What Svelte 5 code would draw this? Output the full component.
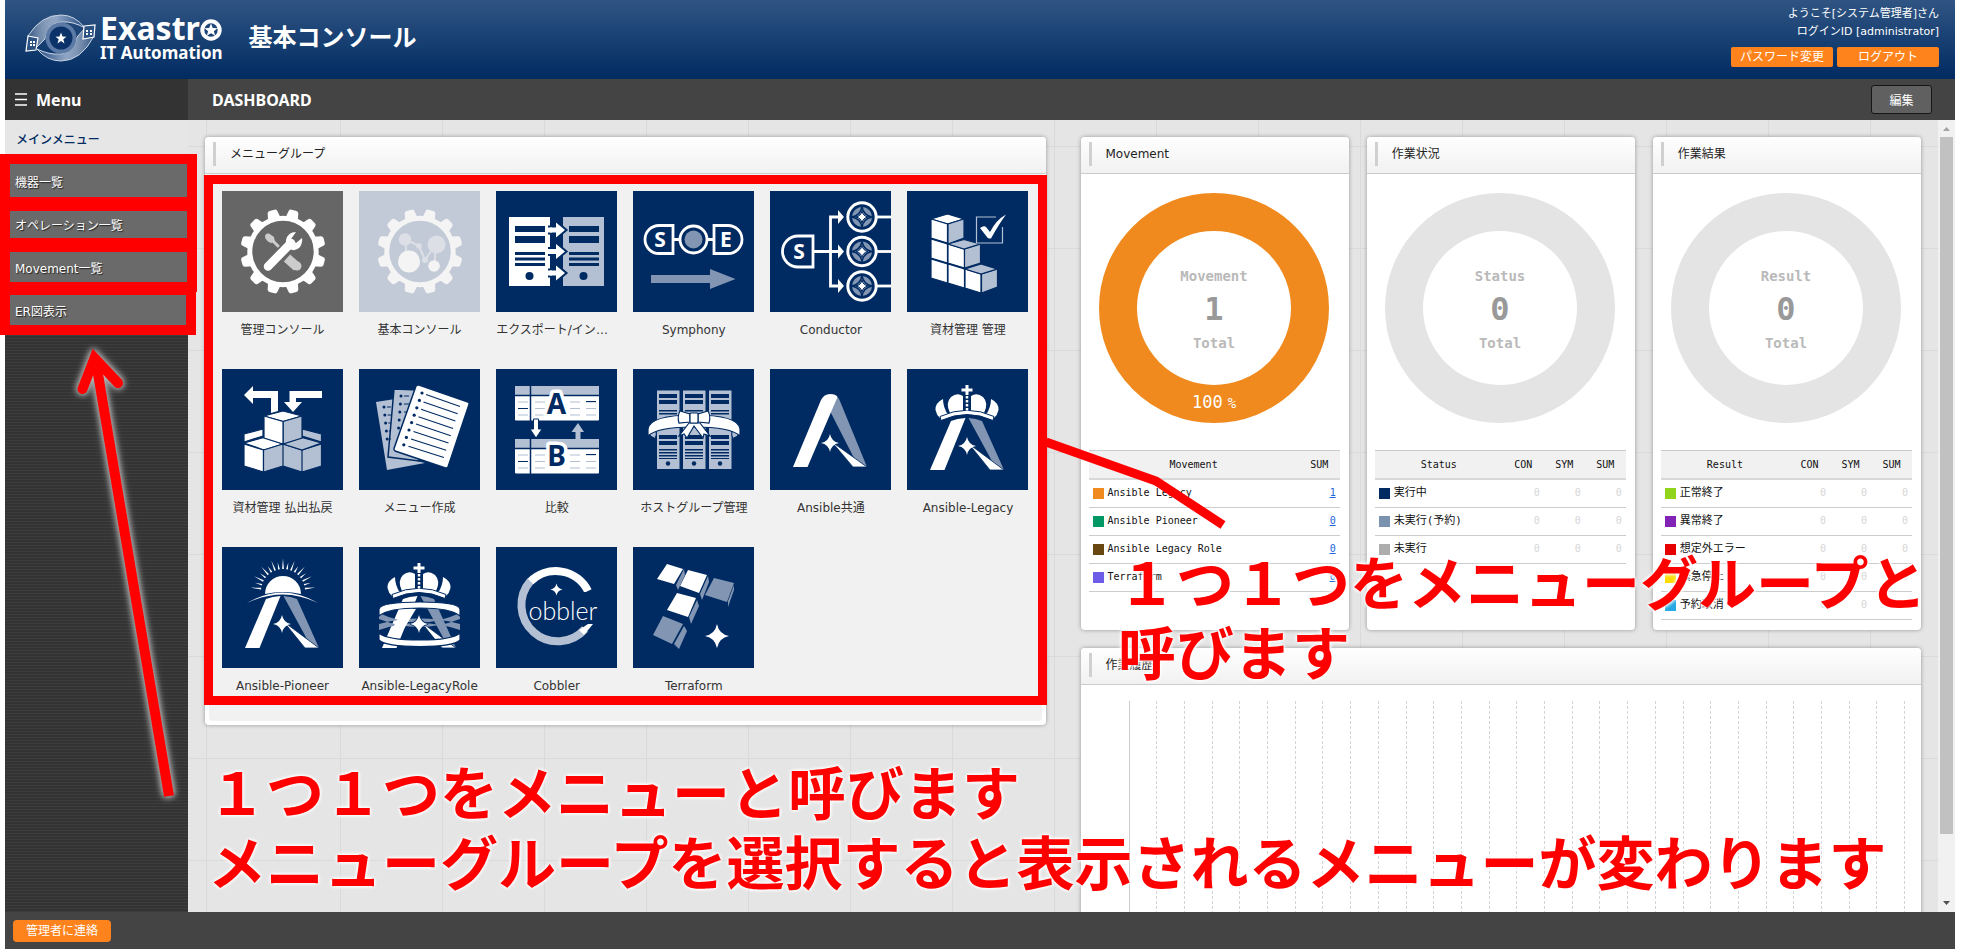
<script>
  const sideItems = ['機器一覧', 'オペレーション一覧', 'Movement一覧', 'ER図表示'];

  const groups = [
    { icon: 'tools', label: '管理コンソール', tone: 'gray' },
    { icon: 'nodes', label: '基本コンソール', tone: 'pale' },
    { icon: 'export', label: 'エクスポート/インポート' },
    { icon: 'symphony', label: 'Symphony' },
    { icon: 'conductor', label: 'Conductor' },
    { icon: 'stock', label: '資材管理 管理' },
    { icon: 'carry', label: '資材管理 払出払戻' },
    { icon: 'sheets', label: 'メニュー作成' },
    { icon: 'compare', label: '比較' },
    { icon: 'hosts', label: 'ホストグループ管理' },
    { icon: 'ansible', label: 'Ansible共通' },
    { icon: 'legacy', label: 'Ansible-Legacy' },
    { icon: 'pioneer', label: 'Ansible-Pioneer' },
    { icon: 'role', label: 'Ansible-LegacyRole' },
    { icon: 'cobbler', label: 'Cobbler' },
    { icon: 'terraform', label: 'Terraform' }
  ];

  const cards = [
    {
      title: 'Movement', name: 'Movement', total: 1, ring: '#f08a1e', percent: '100', cols: ['SUM'],
      rows: [
        { color: '#f08a1e', text: 'Ansible Legacy', values: [1] },
        { color: '#009966', text: 'Ansible Pioneer', values: [0] },
        { color: '#684711', text: 'Ansible Legacy Role', values: [0] },
        { color: '#6c5ce7', text: 'Terraform', values: [0] }
      ]
    },
    {
      title: '作業状況', name: 'Status', total: 0, ring: '#e4e4e4', cols: ['CON', 'SYM', 'SUM'],
      rows: [
        { color: '#002b62', text: '実行中', values: [0, 0, 0] },
        { color: '#7b91b0', text: '未実行(予約)', values: [0, 0, 0] },
        { color: '#adadad', text: '未実行', values: [0, 0, 0] }
      ]
    },
    {
      title: '作業結果', name: 'Result', total: 0, ring: '#e4e4e4', cols: ['CON', 'SYM', 'SUM'],
      rows: [
        { color: '#91d41c', text: '正常終了', values: [0, 0, 0] },
        { color: '#8123b4', text: '異常終了', values: [0, 0, 0] },
        { color: '#e60000', text: '想定外エラー', values: [0, 0, 0] },
        { color: '#ffdc00', text: '緊急停止', values: [0, 0, 0] },
        { color: '#27a9e3', text: '予約取消', values: [0, 0, 0] }
      ]
    }
  ];

  const N = '#002b62';
  const L = '#b3bfd2';
  const M = '#8296b4';
  const range = (n) => Array.from({ length: n }, (_, i) => i);

  const starPath = (x, y, r) => {
    const c = r * 0.16;
    return `M${x} ${y - r}Q${x + c} ${y - c} ${x + r} ${y}Q${x + c} ${y + c} ${x} ${y + r}Q${x - c} ${y + c} ${x - r} ${y}Q${x - c} ${y - c} ${x} ${y - r}z`;
  };
</script>

{#snippet gear(fill)}
  <g transform="translate(61 60.5)" {fill}>
    {#each range(12) as i}
      <path d="M-6.5 -33L-5 -40.5Q-4.6 -42.5 -2.6 -42.6H2.6Q4.6 -42.5 5 -40.5L6.5 -33z" transform="rotate({15 + i * 30})" />
    {/each}
    <circle r="33.2" fill="none" stroke={fill} stroke-width="5" />
  </g>
{/snippet}

{#snippet server(x, y, w, h, fill)}
  <rect {x} {y} width={w} height={h} {fill} />
{/snippet}

{#snippet crown()}
  <g fill="#fff">
    <path d="M58.5 16h3v3.5h4v3h-4v3.500h-3v-3.500h-4v-3h4z" />
    <path d="M36 30Q28 34 28.500 41Q29.500 46 33 49L41 46Q36 38 36 30z" />
    <path d="M84 30Q92 34 91.500 41Q90.500 46 87 49L79 46Q84 38 84 30z" />
    <path d="M43 44Q38 34 44 28Q50 23 56 27V42Q49 42 43 44z" />
    <path d="M77 44Q82 34 76 28Q70 23 64 27V42Q71 42 77 44z" />
    <path d="M33 47.500Q60 35 87 47.500L86 51.500Q60 39.500 34 51.500z" stroke="#002b62" stroke-width="1" />
  </g>
  <path d="M60 27V43" stroke="#fff" stroke-width="2.500" stroke-dasharray="2.500 1.500" />
{/snippet}

{#snippet legs()}
  <path d="M23 101L44 52Q50 49.500 58.500 49L37.500 101z" fill="#fff" />
  <path d="M61.500 49Q69 49.500 75 52L97 101L86 94z" fill={M} />
  <path d="M62 75L97 101H83z" fill="#fff" stroke={N} stroke-width="0.800" />
  <path d={starPath(60, 77, 9)} fill="#fff" />
{/snippet}

{#snippet glyph(name)}
  <svg viewBox="0 0 121 121" aria-hidden="true">
    {#if name === 'tools'}
      {@render gear('#fff')}
      <path d="M49 48L58 57" stroke="#ccc" stroke-width="3" />
      <path d="M43 46Q43 42 47 42.500L52 46L53 51L49 52Q44 50 43 46z" fill="#ccc" />
      <path d="M65 67L75 76" stroke="#ccc" stroke-width="9.500" />
      <circle cx="75" cy="75" r="4.500" fill="#ccc" />
      <path d="M46 75.500L69 52" stroke="#666" stroke-width="12" />
      <path d="M46 75.500L69 52" stroke="#fff" stroke-width="8.500" stroke-linecap="round" />
      <path d="M74 41Q66 41 64 49Q63 55 67 58Q74 61 78 56Q81 51 80 47L74 52L69 48z" fill="#fff" />
    {:else if name === 'nodes'}
      {@render gear('#f4f4f4')}
      <path d="M46 48L60 55L66 69L77 53M47 48V68M76 54V75" fill="none" stroke="#dce0e6" stroke-width="2" />
      <g fill="#dce0e6">
        <circle cx="46" cy="48.500" r="6.200" />
        <circle cx="77.500" cy="53.500" r="9" />
        <circle cx="60" cy="55" r="2.800" />
        <circle cx="66" cy="69" r="3" />
      </g>
      <circle cx="50" cy="70.500" r="11" fill="#f4f4f4" />
      <circle cx="75" cy="75" r="5.800" fill="#f4f4f4" />
    {:else if name === 'export'}
      {#each [[13, '#fff'], [67, L]] as [x, fill]}
        {@render server(x, 26, 41, 69, fill)}
        <g fill={N}>
          <rect x={x + 6} y="35" width="30" height="6" />
          <rect x={x + 6} y="45" width="30" height="7" />
          <rect x={x + 6} y="61" width="30" height="3" />
          <rect x={x + 6} y="66.500" width="30" height="3" />
          <rect x={x + 6} y="72" width="30" height="3" />
          <circle cx={x + 20.5} cy="85" r="4" />
        </g>
      {/each}
      {#each [39, 60.5, 82] as y}
        <path d="M54 {y - 2.500}H60V{y - 7.500}L69 {y}L60 {y + 7.500}V{y + 2.500}H54z" fill="#fff" stroke={N} stroke-width="4" paint-order="stroke" />
        <rect x="50" y={y - 2.500} width="6" height="5" fill="#fff" />
      {/each}
    {:else if name === 'symphony'}
      <g fill="none" stroke="#fff" stroke-width="2.800">
        <path d="M40 34.500H26A14 14 0 0 0 26 62.500H40z" />
        <path d="M81 34.500H95A14 14 0 0 1 95 62.500H81z" />
        <circle cx="60.500" cy="48.500" r="13.500" />
        <path d="M40 48.500H47M74 48.500H81" />
      </g>
      <circle cx="60.500" cy="48.500" r="9" fill={M} />
      <g class="mark" fill="#fff" font-size="21">
        <text x="27" y="56">S</text>
        <text x="93" y="56">E</text>
      </g>
      <path d="M18 84H77V78L102.500 88L77 98V92H18z" fill={M} />
    {:else if name === 'conductor'}
      <g fill="none" stroke="#fff" stroke-width="2.800">
        <path d="M43 45H28A15.500 15.500 0 0 0 28 76H43z" />
        <path d="M43 60.500H70M70 26H60.500V95H70" />
      </g>
      <g class="mark" fill="#fff" font-size="21"><text x="29" y="68">S</text></g>
      {#each [26, 60.5, 95] as y}
        <path d="M68 {y - 7}L74 {y}L68 {y + 7}z" fill="#fff" />
        <path d="M106 {y}H121" stroke="#fff" stroke-width="2.800" />
        <circle cx="92" cy={y} r="14.200" fill={N} stroke="#fff" stroke-width="3" />
        <circle cx="92" cy={y} r="10" fill={M} />
        <path d={starPath(92, y, 10)} fill={M} stroke={N} stroke-width="1.500" />
        <path d={starPath(92, y, 6)} fill="#fff" stroke={N} stroke-width="1" />
      {/each}
    {:else if name === 'stock'}
      <g stroke={N} stroke-width="1.200">
        <g fill="#fff">
          <path d="M24 28L40.500 23L57 28L40.500 33z" />
          <path d="M24 28L40.500 33V52L24 47zM24 48L40.500 53V72L24 67zM24 68L40.500 73V92L24 87z" />
          <path d="M41 53L57.500 58V77L41 72zM41 73L57.500 78V97L41 92zM58 78L74 83V102L58 97z" />
        </g>
        <g fill={L}>
          <path d="M41 33L57 28V47L41 53zM57.500 58L73.500 53V72L57.500 77zM74.500 83L90.500 78V96L74.500 102z" />
          <path d="M41 53L57 48.500L73 53L57 58zM58 78L74 73L90 78L74 83z" />
        </g>
      </g>
      <path d="M89 26H69.500V52H95.500V36" fill="none" stroke={L} stroke-width="1.200" />
      <path d="M73 37Q77 34 79 36L83 41Q89 29 99 23.500Q92 33 84 47.500Q81 48 80 46z" fill="#fff" stroke={N} stroke-width="3" paint-order="stroke" />
    {:else if name === 'carry'}
      <g stroke={N} stroke-width="1.200">
        <g fill="#fff">
          <path d="M22 65L41 60V67L22 73z" />
          <path d="M22 74L42 68.500L61 75L42 81zM22 75L41.500 81V103L22 97z" />
          <path d="M42 47L61 42L80 47L61 52.500z" />
        </g>
        <g fill={L}>
          <path d="M41.500 81L61 75V97L41.500 103zM61 75L80 81V103L61 97zM80 81L99.500 75V97L80 103z" />
          <path d="M61 75L80 68.500L99.500 74L80 81z" />
          <path d="M80 60L99.500 65V73L80 67z" />
          <path d="M61 52.500L80 47V69L61 75z" />
        </g>
        <path d="M42 47L61 52.500V75L42 69z" fill="#fff" />
      </g>
      <path d="M22 26L31 17V22H56V42L49 44V29H31V35z" fill="#fff" />
      <path d="M100 22V29H74V33H80L71 43L62 33H67.500V22z" fill="#fff" />
    {:else if name === 'sheets'}
      <path d="M17 33L36 30L42 88L66 94L28 101z" fill={L} />
      <path d="M35 20L60 21V92L29 88z" fill={L} stroke={N} stroke-width="1.500" />
      {#each range(5) as i}
        <circle cx={25 + i * 0.8} cy={38 + i * 8} r="1.500" fill={N} />
        <path d="M{28 + i * 0.600} {38 + i * 8}H32" stroke={N} />
        <circle cx={42 - i * 0.600} cy={27 + i * 8} r="1.500" fill={N} />
        <path d="M45 {27 + i * 8}H50" stroke={N} />
      {/each}
      <path d="M60 16L109 33Q110.500 34 110 35.500L89 98Q88 99.500 86.500 99L36 82Q34.500 81 35 79.500L57 17Q58 15.500 60 16z" fill="#fff" stroke={N} stroke-width="1.500" />
      {#each range(8) as i}
        <circle cx={63 - i * 2.6} cy={24 + i * 7.4} r="1.600" fill={N} />
        <path d="M{67 - i * 2.500} {25.500 + i * 7.400}L{101 - i * 2.300} {37.500 + i * 7.300}" stroke={N} stroke-width="1.100" />
      {/each}
    {:else if name === 'compare'}
      {#each [17, 70] as y}
        <rect x="19" {y} width="84" height="34.500" rx="1" fill="#fff" />
        <rect x="19" {y} width="84" height="9" fill={L} />
        <path d="M19 {y + 9.500}H103M34.500 {y}V{y + 35}" stroke={N} stroke-width="1.500" />
        {#each [16, 22.5, 29] as dy}
          <path d="M22 {y + dy}H32M39 {y + dy}H49M74 {y + dy}H84M90 {y + dy}H100" stroke={L} stroke-width="1.200" />
        {/each}
        <path d="M22 {y + 22.500}H32M90 {y + 15.500}H100" stroke={N} stroke-width="1.200" />
      {/each}
      <path d="M37.500 50H42.500V60H46L40 69L34 60H37.500z" fill="#fff" stroke={N} stroke-width="1" />
      <path d="M79.500 70V63H75.500L82 54L88 63H84.500V70z" fill={L} />
      <g class="mark" fill={N} stroke="#fff" stroke-width="7" stroke-linejoin="round" paint-order="stroke" font-size="28">
        <text x="60.500" y="45">A</text>
        <text x="60.500" y="97">B</text>
      </g>
    {:else if name === 'hosts'}
      {#each [24, 50, 76] as x}
        {@render server(x, 21.5, 22.5, 78.5, L)}
        <g fill={N}>
          <rect x={x + 2} y="25" width="18" height="4" />
          <rect x={x + 2} y="31" width="18" height="4" />
          <path d="M{x + 2} 41h18v1.500h-18zM{x + 2} 44h18v1.500h-18z" />
          <rect x={x + 2} y="66" width="18" height="4" />
          <rect x={x + 2} y="72" width="18" height="4" />
          <path d="M{x + 2} 80h18v1.500h-18zM{x + 2} 83h18v1.500h-18zM{x + 2} 86h18v1.500h-18zM{x + 2} 89h18v1h-18z" />
          <circle cx={x + 11} cy="94.500" r="2.200" />
        </g>
      {/each}
      <path d="M16 58Q13 66 22 69.500Q24 66 23 62zM106 58Q109 66 100 69.500Q98 66 99 62z" fill={L} stroke={N} />
      <path d="M15 60Q17 46 61 46Q105 46 107 60V67Q98 58 61 58Q24 58 15 67z" fill="#fff" stroke={N} stroke-width="1.200" />
      <g fill="#fff" stroke={N} stroke-width="1.200">
        <path d="M56 54L46 67L51 65L54 69L61 57L70 69L71 65L77 67L67 54z" />
        <path d="M57 45L47 42Q44 47 46 54L57 53zM65 45L75 42Q78 47 76 54L65 53z" />
        <rect x="57" y="44" width="8" height="10" rx="1" />
      </g>
    {:else if name === 'ansible'}
      <path d="M60 27Q67 25 69.500 31L97 98L85 91L60 42z" fill={M} />
      <path d="M23 98L51 31Q54 25 60 25Q66 25 67.500 28L37.500 98z" fill="#fff" />
      <path d="M62 73L97 98H83z" fill="#fff" stroke={N} stroke-width="0.800" />
      <path d={starPath(60, 74, 9)} fill="#fff" />
    {:else if name === 'legacy'}
      {@render legs()}
      {@render crown()}
    {:else if name === 'pioneer'}
      {@render legs()}
      {#each range(17) as i}
        <path d="M-0.900 -22L0 {i % 2 ? -29 : -32.500}L0.900 -22z" fill="#fff" transform="translate(61 44) rotate({-84 + i * 10.500})" />
      {/each}
      <path d="M43 47A18 18 0 1 1 79 47Q61 43 43 47z" fill="#fff" />
      <path d="M25 56Q61 35 96 56Q61 39 25 56z" fill="#fff" />
    {:else if name === 'role'}
      {@render legs()}
      <path d="M20 66Q60 85 101 66V72Q60 88 20 72zM20 83Q60 69 101 83V77Q60 66 20 77z" fill={M} />
      <path d="M28 90L45 62H57L40 90z" fill="#fff" />
      <path d={starPath(60, 77, 9)} fill="#fff" stroke={N} stroke-width="1.500" paint-order="stroke" />
      <path d="M20 62Q22 55 61 55Q99 55 101 62V69Q92 61 61 61Q29 61 20 69z" fill="#fff" stroke={N} stroke-width="1.200" />
      <path d="M20 86Q28 93 61 93Q93 93 101 86V93Q95 99.500 61 99.500Q26 99.500 20 93z" fill="#fff" stroke={N} stroke-width="1.200" />
      {@render crown()}
    {:else if name === 'cobbler'}
      <path d="M34.500 34A36 36 0 1 0 89 82" fill="none" stroke={L} stroke-width="8" />
      <path d="M34.500 34.500A36 36 0 0 1 92 44" fill="none" stroke="#fff" stroke-width="8" />
      <path d="M92 77H97L88 88L83 83z" fill="#fff" />
      <path d="M84 45H100V54H92z" fill={N} />
      <path d={starPath(60.5, 42.5, 6)} fill="#fff" />
      <text class="thin" x="67" y="73" fill="#fff" font-size="25">obbler</text>
    {:else if name === 'terraform'}
      <g fill="#fff">
        <path d="M34 17L50 22L41 37L24 32zM55 23L74 28L66 46L47 39zM44 46L63 51L55 70L34 63z" />
      </g>
      <g fill={M}>
        <path d="M81 31L101 36L94 55L72 48zM30 69L50 77L39 97L20 88z" />
        <path d="M51 22L52 28L45 43L43 38zM75 29L76 35L69 53L67 47zM101 38V43L95 60V54zM64 53L66 59L58 77L56 70zM51 79L54 84L46 102L41 97z" />
      </g>
      <path d={starPath(84, 89, 12)} fill="#fff" />
    {/if}
  </svg>
{/snippet}

<div class="app">
  <header>
    <a class="logo" href="#top" aria-label="Exastro IT Automation">
      <svg class="eye" viewBox="0 0 72 50" aria-hidden="true">
        <defs>
          <linearGradient id="lidTop" x1="0" x2="1">
            <stop offset="0" stop-color="#fff" stop-opacity="0.100" />
            <stop offset="0.500" stop-color="#8ea4c4" />
            <stop offset="1" stop-color="#244a80" />
          </linearGradient>
          <linearGradient id="lidLow" x1="1" x2="0">
            <stop offset="0" stop-color="#fff" stop-opacity="0.100" />
            <stop offset="0.500" stop-color="#8ea4c4" />
            <stop offset="1" stop-color="#244a80" />
          </linearGradient>
        </defs>
        <path d="M3 23Q16 2 36 2Q50 2 60 15Q48 8 36 9Q22 11 20 26L12 34z" fill="url(#lidTop)" stroke="#c9d4e4" />
        <path d="M69 23Q56 48 36 48Q22 48 12 36Q24 42 36 41Q50 39 52 24L60 15z" fill="url(#lidLow)" stroke="#c9d4e4" />
        <circle cx="36" cy="25" r="13.500" fill="#0b3269" stroke="#5c7aa6" stroke-width="4" />
        <path d="M3 23L13 25L11 37L1 38z" fill="#2c5284" stroke="#fff" stroke-width="1.200" />
        <path d="M59 13L70 12L69 24L58 26z" fill="#2c5284" stroke="#fff" stroke-width="1.200" />
        <path d="M5 28h2v2h-2zM8 28h2v2h-2zM5 31h2v2h-2zM8 31h2v2h-2zM61 17h2v2h-2zM65 17h2v2h-2zM61 20h2v2h-2zM65 20h2v2h-2z" fill="#fff" />
        <path d="M36 19.500L37.500 23.500L41.500 23.700L38.300 26.300L39.500 30.500L36 28L32.500 30.500L33.700 26.300L30.500 23.700L34.500 23.500z" fill="#fff" />
      </svg>
      <span class="brand">
        <span class="word">Exastr<svg viewBox="0 0 22 22" aria-hidden="true"><circle cx="11" cy="11" r="8.700" fill="none" stroke="#fff" stroke-width="4" /><path d="M11 4.500L12.800 9L17.500 9.200L13.900 12.200L15.200 16.800L11 14.200L6.800 16.800L8.100 12.200L4.500 9.200L9.200 9z" fill="#fff" /></svg></span>
        <span class="sub">IT Automation</span>
      </span>
    </a>
    <h1>基本コンソール</h1>
    <div class="user">
      <p>ようこそ[システム管理者]さん</p>
      <p>ログインID [administrator]</p>
      <div class="user-buttons">
        <button class="orange">パスワード変更</button>
        <button class="orange">ログアウト</button>
      </div>
    </div>
  </header>

  <div class="bar">
    <button class="menu-toggle">
      <svg viewBox="0 0 12 13" aria-hidden="true"><path d="M0 1H12M0 6.500H12M0 12H12" stroke="#fff" stroke-width="1.500" /></svg>
      Menu
    </button>
    <h2>DASHBOARD</h2>
    <button class="edit">編集</button>
  </div>

  <div class="middle">
    <nav>
      <h3>メインメニュー</h3>
      {#each sideItems as item}
        <a href="#side">{item}</a>
      {/each}
    </nav>

    <main>
      <section class="panel group-panel">
        <h3 class="head">メニューグループ</h3>
        <div class="tiles">
          {#each groups as g}
            <a class="tile" href="#group">
              <span class="pic {g.tone ?? ''}">{@render glyph(g.icon)}</span>
              <span class="label">{g.label}</span>
            </a>
          {/each}
        </div>
      </section>

      <div class="right">
        <div class="cards">
          {#each cards as c}
            <section class="panel">
              <h3 class="head">{c.title}</h3>
              <div class="card-body">
                <svg class="donut" viewBox="0 0 230 230" role="img" aria-label={c.name}>
                  <circle cx="115" cy="115" r="96" fill="none" stroke={c.ring} stroke-width="38" />
                  <text x="115" y="88" class="cap">{c.name}</text>
                  <text x="115" y="127" class="num">{c.total}</text>
                  <text x="115" y="155" class="cap">Total</text>
                  {#if c.percent}
                    <text x="115" y="215" class="pct">{c.percent}<tspan class="sign" dx="5">%</tspan></text>
                  {/if}
                </svg>
                <table>
                  <thead>
                    <tr>
                      <th scope="col">{c.name}</th>
                      {#each c.cols as col}<th scope="col" class="n">{col}</th>{/each}
                    </tr>
                  </thead>
                  <tbody>
                    {#each c.rows as row}
                      <tr>
                        <td class:latin={c.percent}><i style="background:{row.color}"></i>{row.text}</td>
                        {#each row.values as v}
                          <td class="v">{#if c.percent}<a href="#list">{v}</a>{:else}{v}{/if}</td>
                        {/each}
                      </tr>
                    {/each}
                  </tbody>
                </table>
              </div>
            </section>
          {/each}
        </div>

        <section class="panel">
          <h3 class="head">作業履歴</h3>
          <div class="chart">
            {#each range(28) as i}<span></span>{/each}
          </div>
        </section>
      </div>
    </main>

    <div class="scroll" aria-hidden="true">
      <svg viewBox="0 0 17 17"><path d="M5 11L8.500 7L12 11z" fill="#a3a3a3" /></svg>
      <div class="thumb"></div>
      <svg viewBox="0 0 17 17"><path d="M5 6L8.500 10L12 6z" fill="#505050" /></svg>
    </div>
  </div>

  <footer><button class="orange">管理者に連絡</button></footer>

  <div class="frame f1"></div>
  <div class="frame f2"></div>
  <div class="frame f3"></div>
  <div class="frame f4"></div>
  <div class="frame f5"></div>

  <svg class="marks" viewBox="0 0 1975 949" aria-hidden="true">
    <g fill="none" stroke="#f00" stroke-width="10">
      <path d="M1046 442L1156 481L1223 525" stroke-width="9" />
      <g class="glow">
        <path d="M96 362L169 796" />
        <path d="M82.500 389L94.500 358L118 383" stroke-linecap="round" stroke-miterlimit="10" />
      </g>
    </g>
  </svg>

  <p class="note upper">１つ１つをメニューグループと<br />呼びます</p>
  <p class="note lower">１つ１つをメニューと呼びます<br />メニューグループを選択すると表示されるメニューが変わります</p>
</div>

<style>
  :global(body) {
    margin: 0;
    background: #fff;
  }
  .app {
    position: relative;
    display: flex;
    flex-direction: column;
    height: 100vh;
    padding: 0 20px 0 5px;
    box-sizing: border-box;
    overflow: hidden;
    font-family: 'DejaVu Sans', 'Noto Sans CJK JP', sans-serif;
    font-size: 12px;
    color: #333;
  }
  h1, h2, h3, p {
    margin: 0;
    font-size: 12px;
    font-weight: 400;
  }
  a {
    color: inherit;
    text-decoration: none;
  }
  button {
    font: inherit;
    border: 0;
    padding: 0;
    color: #fff;
    cursor: pointer;
  }
  header {
    display: flex;
    align-items: flex-start;
    height: 79px;
    flex: none;
    padding: 0 16px 0 20px;
    background: linear-gradient(#305583, #002b62);
    color: #fff;
  }
  .logo {
    display: flex;
    gap: 3px;
    padding-top: 13px;
  }
  .eye {
    width: 72px;
    height: 50px;
  }
  .brand {
    display: flex;
    flex-direction: column;
    font-family: 'Noto Sans', sans-serif;
    font-weight: 700;
  }
  .word {
    display: flex;
    align-items: center;
    font-size: 32px;
    line-height: 30px;
  }
  .word svg {
    width: 22px;
    height: 22px;
    margin-top: 4px;
  }
  .sub {
    font-size: 17px;
    line-height: 20px;
  }
  h1 {
    margin-left: 26px;
    font: 700 24px/72px 'Noto Sans CJK JP', sans-serif;
  }
  .user {
    margin-left: auto;
    padding-top: 5px;
    text-align: right;
  }
  .user p {
    font-size: 11px;
    line-height: 18px;
  }
  .user-buttons {
    display: flex;
    gap: 4px;
    margin-top: 6px;
  }
  .orange {
    background: #ff831c;
    border-radius: 2px;
    font-size: 12px;
    line-height: 20px;
    width: 102px;
  }
  .bar {
    display: flex;
    align-items: center;
    height: 41px;
    flex: none;
    background: #444;
    color: #fff;
    padding-right: 23px;
    font: 700 16px/38px 'Noto Sans', sans-serif;
  }
  .menu-toggle {
    display: flex;
    align-items: center;
    gap: 9px;
    width: 183px;
    height: 41px;
    padding-left: 10px;
    background: #333;
  }
  .menu-toggle svg {
    width: 12px;
    height: 13px;
  }
  h2 {
    margin-left: 24px;
    font: inherit;
  }
  .edit {
    margin-left: auto;
    width: 61px;
    height: 29px;
    box-sizing: border-box;
    background: #606060;
    border: 1px solid #161616;
    border-radius: 3px;
    font: 12px 'Noto Sans CJK JP', sans-serif;
  }
  .middle {
    display: flex;
    flex: 1;
    min-height: 0;
  }
  nav {
    width: 183px;
    flex: none;
    background: repeating-linear-gradient(#333 0 2px, #3d3d3d 2px 3px);
  }
  nav h3 {
    height: 41px;
    padding-left: 11px;
    background: #e6e6e6;
    color: #002b62;
    line-height: 41px;
    font-weight: 500;
  }
  nav a {
    display: block;
    padding-left: 10px;
    height: 42px;
    line-height: 44px;
    border-bottom: 1px solid #555;
    background: #6a6a6a;
    color: #fff;
    text-shadow: 1px 1px 1px #222;
  }
  main {
    flex: 1;
    min-width: 0;
    display: grid;
    grid-template-columns: 1fr 1fr;
    align-items: start;
    gap: 35px;
    padding: 17px 17px 0;
    overflow: hidden;
    background:
      repeating-linear-gradient(transparent 0 26px, #dadada 26px 27px, transparent 27px 102px),
      linear-gradient(#dadada, #dadada) 18px 0 / 1px 100% no-repeat,
      linear-gradient(#e5e5e5, #e5e5e5) 19px 0 / 132px 100% no-repeat,
      repeating-linear-gradient(90deg, transparent 0 50px, #dadada 50px 51px, transparent 51px 102px),
      #e5e5e5;
  }
  .panel {
    display: flex;
    flex-direction: column;
    background: #fff;
    border-radius: 4px;
    box-shadow: 0 0 4px rgba(0, 0, 0, 0.35);
    min-width: 0;
  }
  .head {
    position: relative;
    height: 36px;
    padding-left: 25px;
    border-bottom: 1px solid #ccc;
    border-radius: 4px 4px 0 0;
    background: linear-gradient(#fff, #f1f1f1);
    line-height: 34px;
    color: #222;
  }
  .head::before {
    content: '';
    position: absolute;
    left: 8px;
    top: 5px;
    width: 3px;
    height: 24px;
    background: #d0d0d0;
  }
  .tiles {
    display: grid;
    grid-template-columns: repeat(6, 1fr);
    row-gap: 30px;
    margin: 0 4px 4px;
    padding: 17px 5px 26px;
    border-radius: 0 0 4px 4px;
    background: #f1f1f1;
  }
  .tile {
    display: flex;
    flex-direction: column;
    align-items: center;
    gap: 9px;
    min-width: 0;
  }
  .pic {
    width: 121px;
    height: 121px;
    background: #002b62;
  }
  .pic.gray {
    background: #666;
  }
  .pic.pale {
    background: #c3cad7;
  }
  .pic svg {
    display: block;
    width: 100%;
  }
  .mark {
    font-family: 'Noto Sans', sans-serif;
    font-weight: 700;
    text-anchor: middle;
  }
  .thin {
    font-family: Lato, sans-serif;
    font-weight: 300;
    text-anchor: middle;
  }
  .label {
    width: 121px;
    line-height: 18px;
    text-align: center;
    white-space: nowrap;
    overflow: hidden;
    text-overflow: ellipsis;
  }
  .right {
    display: flex;
    flex-direction: column;
    gap: 18px;
    min-width: 0;
  }
  .cards {
    display: grid;
    grid-template-columns: repeat(3, 1fr);
    gap: 18px;
  }
  .card-body {
    display: flex;
    flex-direction: column;
    align-items: center;
    padding: 19px 9px 10px 8px;
    font-family: 'DejaVu Sans Mono', 'Noto Sans CJK JP', monospace;
  }
  .donut {
    width: 230px;
    height: 230px;
    margin-bottom: 27px;
    text-anchor: middle;
  }
  .cap {
    font-size: 14px;
    font-weight: 700;
    fill: #b9b9b9;
  }
  .num {
    font-size: 32px;
    font-weight: 700;
    fill: #999;
  }
  .pct {
    font-size: 17px;
    fill: #fff;
  }
  .sign {
    font-size: 14px;
  }
  table {
    width: 100%;
    border-collapse: collapse;
    table-layout: fixed;
    font-size: 10px;
    color: #111;
  }
  th {
    height: 27px;
    padding: 0;
    border-top: 1px solid #ccc;
    border-bottom: 2px solid #d8d8d8;
    background: #f1f1f1;
    font-weight: 400;
    text-align: center;
  }
  .n {
    width: 41px;
  }
  td {
    height: 25px;
    padding: 0 0 2px 4px;
    border-bottom: 1px solid #ccc;
    font-size: 11px;
    line-height: 16px;
    white-space: nowrap;
  }
  td.latin {
    font-size: 10px;
  }
  td i {
    display: inline-block;
    width: 11px;
    height: 11px;
    margin-right: 4px;
    vertical-align: -3px;
  }
  td.v {
    padding-right: 4px;
    text-align: right;
    font-size: 10px;
    color: #d6d6d6;
  }
  td.v a {
    color: #1a66d9;
    text-decoration: underline;
  }
  .chart {
    display: flex;
    height: 270px;
    margin: 16px 16px 16px 48px;
    border-left: 1px solid #ccc;
  }
  .chart span {
    flex: 1;
    background: repeating-linear-gradient(#d4d4d4 0 3px, transparent 3px 5px) right / 1px 100% no-repeat;
  }
  .scroll {
    display: flex;
    flex-direction: column;
    width: 17px;
    flex: none;
    background: #f1f1f1;
  }
  .scroll svg {
    width: 17px;
    height: 17px;
    flex: none;
  }
  .thumb {
    width: 13px;
    height: 88%;
    margin: 0 auto auto;
    background: #c1c1c1;
  }
  footer {
    height: 37px;
    flex: none;
    padding: 8px 8px 0;
    box-sizing: border-box;
    background: #444;
  }
  footer .orange {
    display: block;
    width: 98px;
    line-height: 22px;
    border-radius: 4px;
  }
  .frame {
    position: absolute;
    box-sizing: border-box;
    left: 0;
    width: 197px;
    border: 10px solid #f00;
    pointer-events: none;
  }
  .f1 { top: 154px; height: 53px; }
  .f2 { top: 201px; height: 47px; }
  .f3 { top: 242px; height: 50px; }
  .f4 { top: 285px; height: 50px; width: 196px; }
  .f5 { left: 204px; top: 175px; width: 843px; height: 530px; border-width: 9px; }
  .marks {
    position: absolute;
    left: 0;
    top: 0;
    width: 1975px;
    height: 949px;
    pointer-events: none;
  }
  .glow {
    filter: drop-shadow(0 0 3px #bbb) drop-shadow(0 0 3px #999);
  }
  .note {
    position: absolute;
    font: 700 58px/70px 'Noto Sans CJK JP', sans-serif;
    color: #f00;
    white-space: nowrap;
    text-shadow: 0 0 4px #fff, 0 0 4px #fff, 0 0 3px #fff;
    pointer-events: none;
  }
  .upper { left: 1118px; top: 545px; }
  .lower { left: 208px; top: 755px; }
</style>
